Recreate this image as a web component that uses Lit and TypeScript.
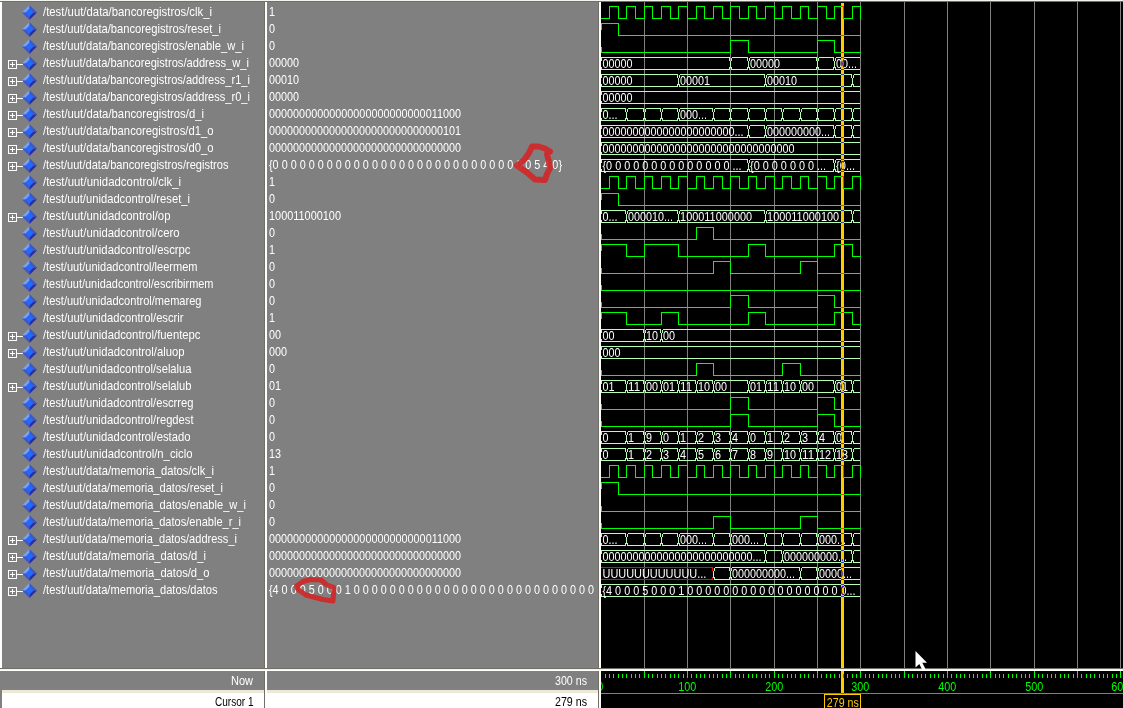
import { LitElement, html, svg, css, nothing } from "lit";
import { customElement, property } from "lit/decorators.js";

type Segment = [number, string?];
interface Signal {
  name: string;
  width: number;
  value: string;
  high?: [number, number][];
  bus?: Segment[];
  unknownUntil?: number;
  expandable?: boolean;
}

const B = "/test/uut/data/bancoregistros/";
const U = "/test/uut/unidadcontrol/";
const M = "/test/uut/data/memoria_datos/";
const zeros = (n: number) => "0".repeat(n);
const list = (n: number) => Array(n).fill("0").join(" ");
const clock: [number, number][] = Array.from({ length: 15 }, (_, i) => [10 + i * 20, 20 + i * 20]);

const bit = (name: string, width: number, value: string, high: [number, number][] = []): Signal => ({ name, width, value, high });
const bus = (name: string, width: number, value: string, segs: Segment[], expandable = true): Signal => ({ name, width, value, bus: segs, expandable });

const stamps = [0, 30, 50, 70, 90, 110, 130, 150, 170, 190, 210, 230, 250, 270];

const signals: Signal[] = [
  bit(B + "clk_i", 169, "1", clock),
  bit(B + "reset_i", 178, "0", [[0, 20]]),
  bit(B + "enable_w_i", 201, "0", [[150, 170], [250, 270]]),
  bus(B + "address_w_i", 206, "00000", [[0, "00000"], [150], [170, "00000"], [250], [270, "00..."]]),
  bus(B + "address_r1_i", 207, "00010", [[0, "00000"], [90, "00001"], [190, "00010"], [290]]),
  bus(B + "address_r0_i", 207, "00000", [[0, "00000"]]),
  bus(B + "d_i", 161, zeros(27) + "11000", [[0, "0..."], [30], [50], [70], [90, "000..."], [130], [150], [170], [190], [210], [230], [250], [270], [290]]),
  bus(B + "d1_o", 170.5, zeros(29) + "101", [[0, zeros(22) + "..."], [170], [190, zeros(9) + "..."], [270], [290]]),
  bus(B + "d0_o", 170.5, zeros(32), [[0, zeros(32)]]),
  bus(B + "registros", 185.5, "{" + list(29) + " 5 4 0}", [[0, "{" + list(14) + " ..."], [170, "{" + list(7) + " ..."], [270, "{0..."]]),
  bit(U + "clk_i", 138, "1", clock),
  bit(U + "reset_i", 147, "0", [[0, 20]]),
  bus(U + "op", 127.5, "100011000100", [[0, "0..."], [30, "000010..."], [90, "100011000000"], [190, "100011000100"], [290]]),
  bit(U + "cero", 136.5, "0", [[110, 130]]),
  bit(U + "escrpc", 147.5, "1", [[0, 30], [50, 90], [170, 190], [270, 290]]),
  bit(U + "leermem", 154.5, "0", [[130, 150], [230, 250]]),
  bit(U + "escribirmem", 170.5, "0"),
  bit(U + "memareg", 158.5, "0", [[150, 170], [250, 270]]),
  bit(U + "escrir", 140.5, "1", [[0, 30], [70, 90], [170, 190], [270, 290]]),
  bus(U + "fuentepc", 157.5, "00", [[0, "00"], [50, "10"], [70, "00"]]),
  bus(U + "aluop", 141.5, "000", [[0, "000"]]),
  bit(U + "selalua", 148.5, "0", [[110, 130], [210, 230]]),
  bus(U + "selalub", 148.5, "01", [[0, "01"], [30, "11"], [50, "00"], [70, "01"], [90, "11"], [110, "10"], [130, "00"], [170, "01"], [190, "11"], [210, "10"], [230, "00"], [270, "01"], [290]]),
  bit(U + "escrreg", 150.5, "0", [[150, 170], [250, 270]]),
  bit(U + "regdest", 150.5, "0", [[150, 170], [250, 270]]),
  bus(U + "estado", 147.5, "0", [...[0, 1, 9, 0, 1, 2, 3, 4, 0, 1, 2, 3, 4, 0].map((v, i): Segment => [stamps[i], String(v)]), [290]], false),
  bus(U + "n_ciclo", 149.5, "13", [...stamps.map((t, i): Segment => [t, String(i)]), [290]], false),
  bit(M + "clk_i", 171, "1", clock),
  bit(M + "reset_i", 180, "0", [[0, 20]]),
  bit(M + "enable_w_i", 203, "0"),
  bit(M + "enable_r_i", 198, "0", [[130, 150], [230, 250]]),
  bus(M + "address_i", 194, zeros(27) + "11000", [[0, "0..."], [30], [50], [70], [90, "000..."], [130], [150, "000..."], [190], [210], [230], [250, "000..."], [290]]),
  bus(M + "d_i", 163, zeros(32), [[0, zeros(25) + "..."], [190], [210, zeros(9) + "..."], [290]]),
  { ...bus(M + "d_o", 166.5, zeros(32), [[0, "U".repeat(12) + "..."], [130], [150, zeros(9) + "..."], [230], [250, "0000..."]]), unknownUntil: 130 },
  bus(M + "datos", 174.5, "{4 0 0 0 5 0 0 0 1 " + list(27), [[0, "{4 0 0 0 5 0 0 0 1 " + list(18) + "..."]]),
];

const ADVANCE: Record<string, number> = { " ": 3, ".": 3, "{": 4, "}": 4, U: 7.9 };
const measure = (s: string) => [...s].reduce((w, c) => w + (ADVANCE[c] ?? 6), 0);

@customElement("fit-text")
class FitText extends LitElement {
  @property() text = "";
  @property({ type: Number }) width = 0;
  static styles = css`
    :host { display: block; height: 17px; }
    svg { display: block; overflow: visible; }
    text { font: 12.2px "Liberation Sans", Arial, sans-serif; fill: currentColor; white-space: pre; }
  `;
  render() {
    return html`<svg width=${this.width} height="17"><text x="0" y="12" textLength=${this.width} lengthAdjust="spacingAndGlyphs">${this.text}</text></svg>`;
  }
}

@customElement("signal-icon")
class SignalIcon extends LitElement {
  @property({ type: Boolean }) expandable = false;
  static styles = css`
    :host { display: block; width: 41px; height: 17px; flex: none; }
    svg { display: block; }
    .line { fill: none; stroke: #fff; shape-rendering: crispEdges; }
  `;
  render() {
    return html`<svg width="41" height="17">
      ${this.expandable ? svg`<path class="line" d="M6.5 5.5h8v8h-8zM8 9.5h5M10.5 7v5M15 9.5h6" />` : nothing}
      <path d="M27.5 1V8.5H20z" fill="#7aa2f0" />
      <path d="M27.5 1V8.5H35z" fill="#3c58c4" />
      <path d="M27.5 16V8.5H20z" fill="#3c58cc" />
      <path d="M27.5 16V8.5H35z" fill="#2a2ca0" />
      <path d="M27.5 4.5l4 4-4 4-4-4z" fill="#2468fc" />
    </svg>`;
  }
}

@customElement("wave-view")
class WaveView extends LitElement {
  static styles = css`
    :host { display: block; background: #000; overflow: hidden; }
    svg { display: block; }
    path, line, rect { shape-rendering: crispEdges; fill: none; }
    .grid { stroke: #808080; }
    .bit { stroke: #00ff00; }
    .bus { stroke: #b4ffb4; }
    .unknown { stroke: #ff0000; }
    text { font: 12.3px "Liberation Sans", Arial, sans-serif; fill: #fff; white-space: pre; }
    .cursor { fill: #ffcc00; mix-blend-mode: difference; }
  `;
  static x(t: number) { return Math.floor(600.95 + 0.8665 * t); }

  bitPath(s: Signal, row: number) {
    const hi = 6.5 + row * 17, lo = hi + 12;
    const startsHigh = s.high!.some(([a]) => a === 0);
    let d = startsHigh ? `M601.5 ${hi + 6}V${hi}` : `M601.5 ${lo - 6}V${lo}`;
    if (s.name.endsWith("clk_i")) d = `M601 ${lo}`;
    for (const [a, b] of s.high!) {
      if (a > 0) d += `H${WaveView.x(a) + 0.5}V${hi}`;
      d += `H${WaveView.x(b) + 0.5}V${lo}`;
    }
    return svg`<path class="bit" d=${d + "H860.5"} />`;
  }

  busPath(s: Signal, row: number) {
    const top = 6.5 + row * 17, bot = top + 12;
    return s.bus!.map(([t, label], i) => {
      const next = s.bus![i + 1]?.[0];
      const a = WaveView.x(t) + 0.5;
      const b = next === undefined ? 860 : WaveView.x(next) + 0.5;
      const unknown = s.unknownUntil !== undefined && t < s.unknownUntil;
      let d = `M${t === 0 ? 601 : a + 1} ${top}H${next === undefined ? b : b - 1}`;
      if (next !== undefined) d += `V${top + 3}M${b} ${top + 3}V${bot - 2}M${b - 1} ${bot - 3}V${bot}`;
      else d += `M${b} ${bot}`;
      d += `H${t === 0 ? 601 : a + 1}`;
      if (!unknown) d += `M${a + 1} ${bot}V${bot - 3}M${a} ${bot - 2}V${top + 3}M${a + 1} ${top + 3}V${top}`;
      const w = label ? measure(label) : 0;
      const tx = a + (t === 0 ? 2 : 1.6);
      return svg`<path class=${unknown ? "unknown" : "bus"} d=${d} />
        ${label ? svg`<text x=${tx} y=${17 + row * 17} textLength=${w} lengthAdjust="spacingAndGlyphs">${label}</text>` : nothing}`;
    });
  }

  render() {
    const grid = Array.from({ length: 12 }, (_, i) => WaveView.x((i + 1) * 50) + 0.5);
    return html`<svg width="522" height="666" viewBox="601 2 522 666">
      ${grid.map((x) => svg`<line class="grid" x1=${x} x2=${x} y1="2" y2="668" />`)}
      ${signals.map((s, i) => (s.bus ? this.busPath(s, i) : this.bitPath(s, i)))}
      <rect class="cursor" x="841" y="3" width="3" height="665" />
    </svg>`;
  }
}

@customElement("time-ruler")
class TimeRuler extends LitElement {
  static styles = css`
    :host { display: block; background: #000; overflow: hidden; }
    svg { display: block; }
    path, rect { shape-rendering: crispEdges; fill: none; }
    .tick { stroke: #00ff00; }
    .base { stroke: #808080; }
    text { font: 12.2px "Liberation Sans", Arial, sans-serif; fill: #00ff00; text-anchor: middle; }
    .cursor { fill: #ffcc00; mix-blend-mode: difference; }
    .box { stroke: #ffcc00; }
    .stamp { fill: #ffcc00; }
  `;
  render() {
    let d = "";
    for (let t = 0; t <= 600; t += 5) d += `M${WaveView.x(t) + 0.5} ${t % 50 ? 674 : 671}V678`;
    return html`<svg width="522" height="37" viewBox="601 671 522 37">
      <path class="tick" d=${d} />
      <path class="base" d="M601 693.5H1123" />
      ${[0, 100, 200, 300, 400, 500, 600].map((t) => svg`<text x=${WaveView.x(t) + 0.3} y="691" textLength=${t ? 18 : 6} lengthAdjust="spacingAndGlyphs">${t}</text>`)}
      <rect class="cursor" x="841" y="671" width="3" height="23" />
      <rect class="box" x="824.5" y="694.5" width="36" height="20" />
      <text class="stamp" x="842.8" y="707" textLength="32" lengthAdjust="spacingAndGlyphs">279 ns</text>
    </svg>`;
  }
}

@customElement("app-root")
class AppRoot extends LitElement {
  static styles = css`
    :host { display: block; position: relative; width: 1123px; height: 708px; overflow: hidden; background: #fff; }
    .layout { display: grid; height: 708px; grid-template-columns: 264px 3px 331px 3px 522px; grid-template-rows: 2px 666px 3px 37px; }
    .edge { grid-column: 1 / -1; background: linear-gradient(#f4f4ee 50%, #716f64 50%); }
    .pane { background: #808080; color: #fff; padding-top: 2px; overflow: hidden; box-sizing: border-box; }
    .names { border-left: 2px solid #fff; }
    .row { display: flex; height: 17px; }
    .values { padding-left: 2px; }
    .vbar { background: linear-gradient(90deg, #716f64 33.4%, #fff 33.4%); }
    .hbar { grid-column: 1 / -1; background: linear-gradient(#716f64 33.4%, #f4f3ea 33.4% 66.7%, #fff 66.7%); }
    .foot { display: grid; grid-template-rows: 19px 18px; background: #fff; }
    .first { border-left: 2px solid #808080; }
    .now, .cur { display: flex; justify-content: flex-end; padding-right: 11px; box-sizing: border-box; overflow: hidden; }
    .now { background: #808080; color: #fff; padding-top: 2px; }
    .cur { color: #000; border-top: 3px solid #ece9d8; padding-top: 1px; }
    .overlay { position: absolute; inset: 0; pointer-events: none; }
    .mark { fill: none; stroke: #d02828; stroke-linejoin: round; opacity: 0.93; }
  `;
  render() {
    const foot = (cls: string, a: string, aw: number, b: string, bw: number) => html`<div class="foot ${cls}">
      <div class="now"><fit-text .text=${a} .width=${aw}></fit-text></div>
      <div class="cur"><fit-text .text=${b} .width=${bw}></fit-text></div>
    </div>`;
    return html`<div class="layout">
        <div class="edge"></div>
        <div class="pane names">
          ${signals.map((s) => html`<div class="row"><signal-icon ?expandable=${!!s.expandable}></signal-icon><fit-text .text=${s.name} .width=${s.width}></fit-text></div>`)}
        </div>
        <div class="vbar"></div>
        <div class="pane values">
          ${signals.map((s) => html`<div class="row"><fit-text .text=${s.value} .width=${measure(s.value)}></fit-text></div>`)}
        </div>
        <div class="vbar"></div>
        <wave-view></wave-view>
        <div class="hbar"></div>
        ${foot("first", "Now", 22, "Cursor 1", 38.5)}
        <div class="vbar"></div>
        ${foot("", "300 ns", 32, "279 ns", 32)}
        <div class="vbar"></div>
        <time-ruler></time-ruler>
      </div>
      <svg class="overlay" width="1123" height="708">
        <path class="mark" stroke-width="6" d="M517 165.5L524 160L529 153L532 146.5L538.5 146.5L545 148.5L550 151.5L547 154L549 162L550 168L547 174L545 180L535 179.5L527 172.5Z" />
        <path class="mark" stroke-width="5" d="M310 579.5L321 580L327 585L334 587.5L333.5 594L333 601L323 599.5L306 595L298 589.5L296.5 586L303 581.5Z" />
        <path fill="#fff" d="M915.5 651V667.5L919.3 664L922.5 670.5L925.5 669L922.3 662.7H927Z" />
      </svg>`;
  }
}
